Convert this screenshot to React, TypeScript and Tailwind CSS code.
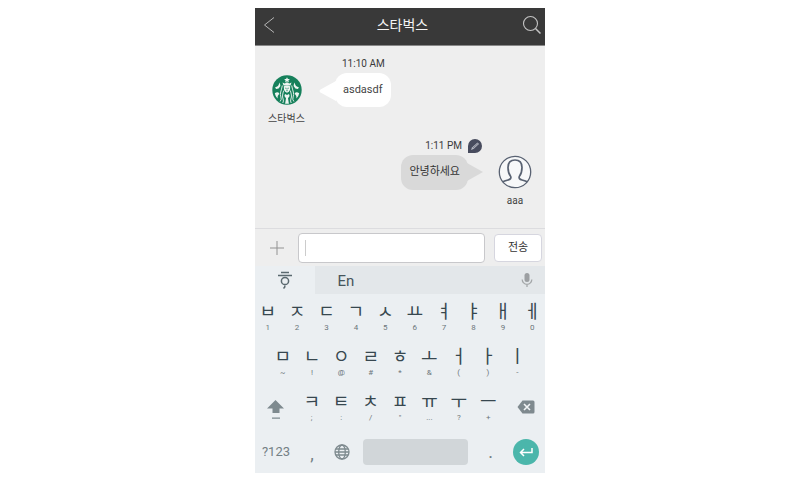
import type { ReactNode } from "react";

const FONT = "font-[Roboto,'Noto_Sans_CJK_KR',sans-serif]";

const ROW_ONE = [
  ["ㅂ", "1"], ["ㅈ", "2"], ["ㄷ", "3"], ["ㄱ", "4"], ["ㅅ", "5"],
  ["ㅛ", "6"], ["ㅕ", "7"], ["ㅑ", "8"], ["ㅐ", "9"], ["ㅔ", "0"],
];
const ROW_TWO = [
  ["ㅁ", "~"], ["ㄴ", "!"], ["ㅇ", "@"], ["ㄹ", "#"], ["ㅎ", "*"],
  ["ㅗ", "&"], ["ㅓ", "("], ["ㅏ", ")"], ["ㅣ", "-"],
];
const ROW_THREE = [
  ["ㅋ", ";"], ["ㅌ", ":"], ["ㅊ", "/"], ["ㅍ", "\""],
  ["ㅠ", "..."], ["ㅜ", "?"], ["ㅡ", "+"],
];

function Key({ letter, hint }: { letter: string; hint: string }) {
  return (
    <button type="button" className="flex h-[45px] min-w-0 flex-col items-center">
      <span className="h-6 text-lg leading-6 text-[#37474f]">{letter}</span>
      <span className="text-[8px] leading-2 text-[#6b767a]">{hint}</span>
    </button>
  );
}

function IconKey({ label, children }: { label: string; children: ReactNode }) {
  return (
    <button type="button" aria-label={label} className="flex items-center justify-center pb-2">
      {children}
    </button>
  );
}

function Siren() {
  return (
    <svg viewBox="0 0 30 30" className="size-[30px]" role="img" aria-label="스타벅스">
      <circle cx="15" cy="15" r="14.7" fill="#16805b" />
      <g fill="#eef4f1">
        <path d="M15 2.200l.9 1.700 2 .2-1.500 1.300.5 2-1.900-1.100-1.900 1.100.5-2-1.500-1.300 2-.2z" />
        <path d="M10.500 7.500l2.200 1 2.300-1.200 2.300 1.200 2.200-1-1 2.900h-7z" />
        <path d="M11.800 11.200q3.200-1.500 6.400 0l-.2 3.600q-.8 2.300-3 3-2.200-.7-3-3z" />
        <path d="M13 19l2 1 2-1 .6 2-1.600 2.300.9 5.500h-3.800l.9-5.500-1.600-2.300z" />
        <path d="M3 12.500l3-1.600 1.800-3.400.6 3.400-1.800 2.700-2.400.4zM27 12.500l-3-1.600-1.800-3.400-.6 3.400 1.800 2.700 2.400.4z" />
        <path d="M2.800 18.200q2.800-2 4.600.2l-1.700 2.600-.2 2.500q-2.100-2.200-2.700-5.300zM27.200 18.200q-2.800-2-4.600.2l1.700 2.600.2 2.500q2.100-2.200 2.700-5.300z" />
      </g>
      <g fill="none" stroke="#eef4f1" strokeWidth=".9">
        <path d="M10.300 10.500q-.8 4-1.600 6.500t.2 5-.8 4.500M11.700 15.500q-.8 2.500-1.100 4.500t.5 4-.3 4" />
        <path d="M19.700 10.500q.8 4 1.600 6.500t-.2 5 .8 4.500M18.300 15.500q.8 2.500 1.100 4.500t-.5 4 .3 4" />
      </g>
      <path d="M13 13.200h1.300M15.700 13.200H17M14 15.700h2M15 13v1.700" stroke="#16805b" strokeWidth=".6" />
    </svg>
  );
}

function Person() {
  return (
    <svg viewBox="0 0 34 34" className="size-[34px]" fill="none" stroke="#596272" role="img" aria-label="aaa">
      <circle cx="17" cy="17" r="15.700" fill="#f7f8f9" strokeWidth="1.300" />
      <path
        d="M4.500 27q1.500-1 5.500-2 3.700-1 2.700-3.500-2.700-3.400-2.700-9 0-7.500 7-7.500t7 7.500q0 5.600-2.700 9-1 2.500 2.700 3.500 4 1 5.500 2"
        strokeWidth="1.700"
      />
    </svg>
  );
}

export default function App() {
  return (
    <div className={`flex min-h-screen justify-center bg-white pt-2 ${FONT}`}>
      <main className="w-full max-w-[290px] self-start bg-[#eeeeee]">
        <header className="flex h-[38px] items-center justify-between border-b border-[#888888] bg-[#393939] pr-[3px] pb-1 pl-2">
          <button type="button" aria-label="뒤로" className="w-5">
            <svg viewBox="0 0 12 18" className="h-[18px] w-3" fill="none" stroke="#b5b5b5">
              <path d="M11 1.500L1.500 9 11 16.500" />
            </svg>
          </button>
          <h1 className="text-sm leading-5 text-[#f4f4f4]">스타벅스</h1>
          <button type="button" aria-label="검색" className="w-5">
            <svg viewBox="0 0 20 20" className="size-5" fill="none" stroke="#c4c4c4">
              <circle cx="8.500" cy="8.500" r="7" strokeWidth="1.100" />
              <path d="M13.500 13.500L18.500 18.500" strokeWidth="1.500" />
            </svg>
          </button>
        </header>

        <section aria-label="대화" className="h-[182px] pt-3">
          <article className="flex">
            <div className="flex w-[63px] flex-col items-center pt-[17px]">
              <Siren />
              <span className="mt-1.5 text-[10px] leading-4 text-[#444444]">스타벅스</span>
            </div>
            <div>
              <time className="block pl-6 text-[10px] leading-3 text-[#3a3a3a]">11:10 AM</time>
              <div className="mt-[3px] flex">
                <svg viewBox="0 0 18 20" className="mt-2 h-5 w-[18px]" fill="white">
                  <path d="M18 0L2.500 8.500q-2 1.500 0 3L18 20z" />
                </svg>
                <p className="-ml-px rounded-xl bg-white px-2 py-[9px] text-[11px] leading-4 text-[#444444]">asdasdf</p>
              </div>
            </div>
          </article>

          <article className="mt-3 flex justify-end">
            <div>
              <div className="flex items-center justify-end gap-1.5 pr-px">
                <time className="text-[10px] leading-[14px] text-[#3a3a3a]">1:11 PM</time>
                <svg viewBox="0 0 14 14" className="size-[14px]">
                  <path d="M0 14V7a7 7 0 1 1 7 7z" fill="#484c5e" />
                  <path d="M3 11l1-2.500 5.500-5 1.500 1.500-5.500 5z" fill="#b7bac4" />
                  <path d="M5 9l5-4.500" stroke="#555969" strokeWidth=".6" />
                </svg>
              </div>
              <div className="mt-0.5 flex">
                <p className="rounded-xl bg-[#d9d9d9] px-2 pt-[9px] pb-2.5 text-[11px] leading-4 text-[#333333]">안녕하세요</p>
                <svg viewBox="0 0 16 20" className="mt-2 -ml-px h-5 w-4" fill="#d9d9d9">
                  <path d="M0 0l16 9L0 18z" />
                </svg>
              </div>
            </div>
            <div className="flex w-[62px] flex-col items-center pt-4 pl-0.5">
              <Person />
              <span className="mt-1 text-[10px] leading-4 text-[#444444]">aaa</span>
            </div>
          </article>
        </section>

        <form className="flex h-[38px] items-center border-t border-[#dcdcdf] pr-[3px]" onSubmit={(event) => event.preventDefault()}>
          <button type="button" aria-label="추가" className="flex w-[43px] shrink-0 justify-center">
            <svg viewBox="0 0 14 14" className="size-[14px]" stroke="#929292">
              <path d="M7 0v14M0 7h14" />
            </svg>
          </button>
          <div className="flex h-[30px] min-w-0 flex-1 items-center rounded border border-[#c8c8cb] bg-white px-1.5">
            <span className="h-4 w-px bg-[#cccccc]" />
            <input aria-label="메시지" className="h-full w-full min-w-0 bg-transparent text-xs outline-none" />
          </div>
          <button type="submit" className="ml-[9px] h-7 w-12 shrink-0 rounded border border-[#d6d6df] bg-white pt-0.5 text-[11px] text-[#333333]">
            전송
          </button>
        </form>

        <section aria-label="키보드" className="bg-[#ebeff2] pb-[5px]">
          <div className="flex h-7 bg-[#e3e7ea]">
            <button type="button" aria-label="한글" className="flex w-[60px] items-center justify-center bg-[#ebeff2]">
              <svg viewBox="0 0 14 18" className="h-[18px] w-[14px]" fill="none" stroke="#5a696f" strokeWidth="1.500">
                <path d="M3 1.500h8M0 4.500h14" />
                <circle cx="7" cy="10" r="3.600" />
                <path d="M6.800 14.500v1.500l-1.300 1.500" />
              </svg>
            </button>
            <button type="button" className="w-[62px] pt-0.5 text-[15px] text-[#46555c]">En</button>
            <button type="button" aria-label="음성 입력" className="ml-auto flex w-9 items-center justify-center">
              <svg viewBox="0 0 12 16" className="h-4 w-3">
                <rect x="3.500" y="1" width="5" height="9" rx="2.500" fill="#9c9fa2" />
                <path d="M1.200 7.500a4.800 4.800 0 0 0 9.600 0M6 12v3" fill="none" stroke="#a5a8aa" strokeWidth="1.300" />
              </svg>
            </button>
          </div>

          <div className="-mx-0.5 grid grid-cols-10 pt-1.5">
            {ROW_ONE.map(([letter, hint]) => <Key key={letter} letter={letter} hint={hint} />)}
          </div>
          <div className="grid grid-cols-9 px-[13px]">
            {ROW_TWO.map(([letter, hint]) => <Key key={letter} letter={letter} hint={hint} />)}
          </div>
          <div className="grid grid-cols-[42px_repeat(7,minmax(0,1fr))_42px]">
            <IconKey label="시프트">
              <svg viewBox="0 0 18 20" className="h-5 w-[18px]" fill="#7e8a8f">
                <path d="M8.500 1L17 9.500h-4.500V14h-7V9.500H0zM5 18.500h8v1.200H5z" />
              </svg>
            </IconKey>
            {ROW_THREE.map(([letter, hint]) => <Key key={letter} letter={letter} hint={hint} />)}
            <IconKey label="지우기">
              <svg viewBox="0 0 18 14" className="mb-1 ml-1 h-[14px] w-[18px]">
                <path d="M5.500.500H16q1.500 0 1.500 1.500v10q0 1.500-1.500 1.500H5.500L.500 7z" fill="#7f8a8f" />
                <path d="M7 4l6 6M13 4l-6 6" stroke="#f2f5f6" strokeWidth="1.600" />
              </svg>
            </IconKey>
          </div>
          <div className="flex h-[33px] items-center">
            <button type="button" className="w-[42px] text-[13px] text-[#748085]">?123</button>
            <button type="button" className="w-[30px] pt-1 text-lg text-[#748085]">,</button>
            <button type="button" aria-label="언어 변경" className="flex w-[30px] justify-center">
              <svg viewBox="0 0 16 16" className="size-4" fill="none" stroke="#7e8a8f" strokeWidth="1.300">
                <circle cx="8" cy="8" r="7" />
                <ellipse cx="8" cy="8" rx="3.300" ry="7" />
                <path d="M1 8h14M2 5h12M2 11h12" />
              </svg>
            </button>
            <button type="button" aria-label="스페이스" className="ml-1.5 h-[26px] min-w-0 flex-1 rounded bg-[#d1d6d9]" />
            <button type="button" className="w-[45px] text-lg text-[#748085]">.</button>
            <button type="button" aria-label="입력" className="mr-1.5 flex size-[26px] shrink-0 items-center justify-center rounded-full bg-[#4bb6ab]">
              <svg viewBox="0 0 14 10" className="h-2.5 w-[14px]" fill="none" stroke="white" strokeWidth="1.500">
                <path d="M13 1v4.500H1.500M5 2L1.500 5.500 5 9" />
              </svg>
            </button>
          </div>
        </section>
      </main>
    </div>
  );
}
